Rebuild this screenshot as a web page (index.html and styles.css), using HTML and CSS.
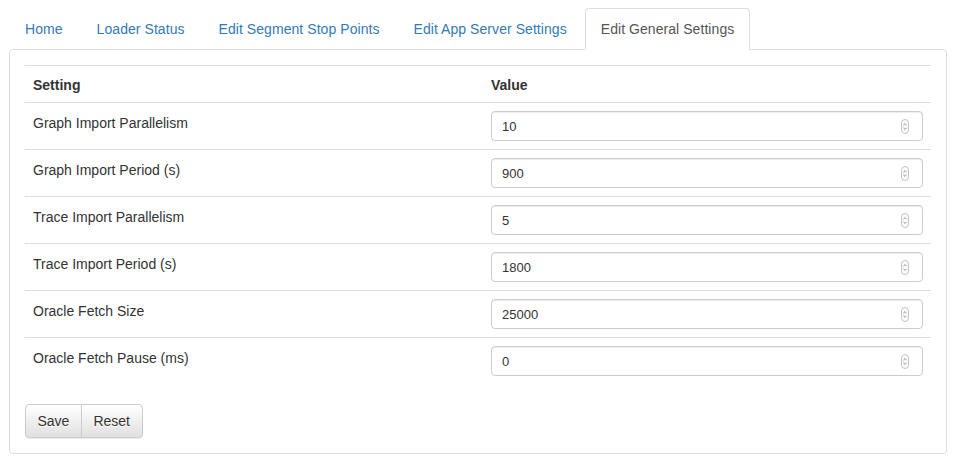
FILE: index.html
```html
<!DOCTYPE html>
<html>
<head>
<meta charset="utf-8">
<link rel="stylesheet" href="styles.css">
</head>
<body>
<div class="page">
  <ul class="tabs">
    <li class="tab"><a class="tab-link" href="#">Home</a></li>
    <li class="tab"><a class="tab-link" href="#">Loader Status</a></li>
    <li class="tab"><a class="tab-link" href="#">Edit Segment Stop Points</a></li>
    <li class="tab"><a class="tab-link" href="#">Edit App Server Settings</a></li>
    <li class="tab active"><a class="tab-link" href="#">Edit General Settings</a></li>
  </ul>
  <div class="panel">
    <table class="settings">
      <thead>
        <tr><th class="col-setting">Setting</th><th>Value</th></tr>
      </thead>
      <tbody>
        <tr><td class="label">Graph Import Parallelism</td><td><div class="field"><input class="field-input" type="text" value="10"><svg class="spin" width="8" height="15" viewBox="0 0 8 15"><rect x="0.5" y="0.5" width="7" height="14" rx="3.5" fill="#fbfbfb" stroke="#c4c4c4"/><path d="M2.4 6.2 L4 4.6 L5.6 6.2" fill="none" stroke="#8a8a8a" stroke-width="0.9"/><path d="M2.4 8.8 L4 10.4 L5.6 8.8" fill="none" stroke="#8a8a8a" stroke-width="0.9"/></svg></div></td></tr>
        <tr><td class="label">Graph Import Period (s)</td><td><div class="field"><input class="field-input" type="text" value="900"><svg class="spin" width="8" height="15" viewBox="0 0 8 15"><rect x="0.5" y="0.5" width="7" height="14" rx="3.5" fill="#fbfbfb" stroke="#c4c4c4"/><path d="M2.4 6.2 L4 4.6 L5.6 6.2" fill="none" stroke="#8a8a8a" stroke-width="0.9"/><path d="M2.4 8.8 L4 10.4 L5.6 8.8" fill="none" stroke="#8a8a8a" stroke-width="0.9"/></svg></div></td></tr>
        <tr><td class="label">Trace Import Parallelism</td><td><div class="field"><input class="field-input" type="text" value="5"><svg class="spin" width="8" height="15" viewBox="0 0 8 15"><rect x="0.5" y="0.5" width="7" height="14" rx="3.5" fill="#fbfbfb" stroke="#c4c4c4"/><path d="M2.4 6.2 L4 4.6 L5.6 6.2" fill="none" stroke="#8a8a8a" stroke-width="0.9"/><path d="M2.4 8.8 L4 10.4 L5.6 8.8" fill="none" stroke="#8a8a8a" stroke-width="0.9"/></svg></div></td></tr>
        <tr><td class="label">Trace Import Period (s)</td><td><div class="field"><input class="field-input" type="text" value="1800"><svg class="spin" width="8" height="15" viewBox="0 0 8 15"><rect x="0.5" y="0.5" width="7" height="14" rx="3.5" fill="#fbfbfb" stroke="#c4c4c4"/><path d="M2.4 6.2 L4 4.6 L5.6 6.2" fill="none" stroke="#8a8a8a" stroke-width="0.9"/><path d="M2.4 8.8 L4 10.4 L5.6 8.8" fill="none" stroke="#8a8a8a" stroke-width="0.9"/></svg></div></td></tr>
        <tr><td class="label">Oracle Fetch Size</td><td><div class="field"><input class="field-input" type="text" value="25000"><svg class="spin" width="8" height="15" viewBox="0 0 8 15"><rect x="0.5" y="0.5" width="7" height="14" rx="3.5" fill="#fbfbfb" stroke="#c4c4c4"/><path d="M2.4 6.2 L4 4.6 L5.6 6.2" fill="none" stroke="#8a8a8a" stroke-width="0.9"/><path d="M2.4 8.8 L4 10.4 L5.6 8.8" fill="none" stroke="#8a8a8a" stroke-width="0.9"/></svg></div></td></tr>
        <tr><td class="label">Oracle Fetch Pause (ms)</td><td><div class="field"><input class="field-input" type="text" value="0"><svg class="spin" width="8" height="15" viewBox="0 0 8 15"><rect x="0.5" y="0.5" width="7" height="14" rx="3.5" fill="#fbfbfb" stroke="#c4c4c4"/><path d="M2.4 6.2 L4 4.6 L5.6 6.2" fill="none" stroke="#8a8a8a" stroke-width="0.9"/><path d="M2.4 8.8 L4 10.4 L5.6 8.8" fill="none" stroke="#8a8a8a" stroke-width="0.9"/></svg></div></td></tr>
      </tbody>
    </table>
    <div class="btn-group">
      <button class="btn btn-first" type="button">Save</button>
      <button class="btn btn-last" type="button">Reset</button>
    </div>
  </div>
</div>
</body>
</html>
```

FILE: styles.css
```css
* { box-sizing: border-box; }
html, body { margin: 0; background: #fff; }
body {
  font-family: "Liberation Sans", Arial, Helvetica, sans-serif;
  font-size: 14px;
  line-height: 20px;
  color: #333;
}
.page { padding: 8px 9px 0 9px; }

.tabs {
  display: flex;
  list-style: none;
  margin: 0;
  padding: 0;
}
.tab { margin-bottom: -1px; }
.tab-link {
  display: block;
  margin-right: 2px;
  padding: 10px 15px;
  border: 1px solid transparent;
  border-radius: 4px 4px 0 0;
  color: #337ab7;
  text-decoration: none;
  line-height: 20px;
  letter-spacing: 0.06px;
}
.tab.active { position: relative; z-index: 1; }
.tab.active .tab-link {
  color: #555;
  background: #fff;
  border-color: #ddd #ddd transparent #ddd;
}

.panel {
  border: 1px solid #ddd;
  border-radius: 4px;
  padding: 15px 15px 15px 15px;
}

.settings {
  width: 100%;
  border-collapse: collapse;
}
.settings th, .settings td {
  padding: 8px;
  line-height: 20px;
  border-top: 1px solid #ddd;
  vertical-align: top;
  text-align: left;
}
.settings th { font-weight: bold; padding: 9px 8px 7px 8px; }
.settings td.label { padding: 10px 8px 6px 8px; }
.col-setting { width: 458px; }

.field {
  display: flex;
  align-items: center;
  height: 30px;
  border: 1px solid #ccc;
  border-radius: 4px;
  box-shadow: inset 0 1px 1px rgba(0,0,0,.075);
  padding: 0 13px 0 10px;
  background: #fff;
}
.field-input {
  flex: 1;
  min-width: 0;
  border: 0;
  outline: 0;
  padding: 0;
  margin: 0;
  background: transparent;
  font-family: "Liberation Sans", Arial, Helvetica, sans-serif;
  font-size: 13px;
  color: #333;
}
.spin { display: block; flex: none; }

.btn-group {
  display: flex;
  margin-top: 20px;
}
.btn {
  font-family: "Liberation Sans", Arial, Helvetica, sans-serif;
  font-size: 14px;
  line-height: 20px;
  padding: 6px 11.5px;
  color: #333;
  border: 1px solid #ccc;
  background-image: linear-gradient(to bottom, #fff 0, #e0e0e0 100%);
  text-shadow: 0 1px 0 #fff;
  box-shadow: inset 0 1px 0 rgba(255,255,255,.15), 0 1px 1px rgba(0,0,0,.075);
  cursor: pointer;
  margin: 0;
}
.btn-first { border-radius: 4px 0 0 4px; }
.btn-last { border-radius: 0 4px 4px 0; margin-left: -1px; }
```
